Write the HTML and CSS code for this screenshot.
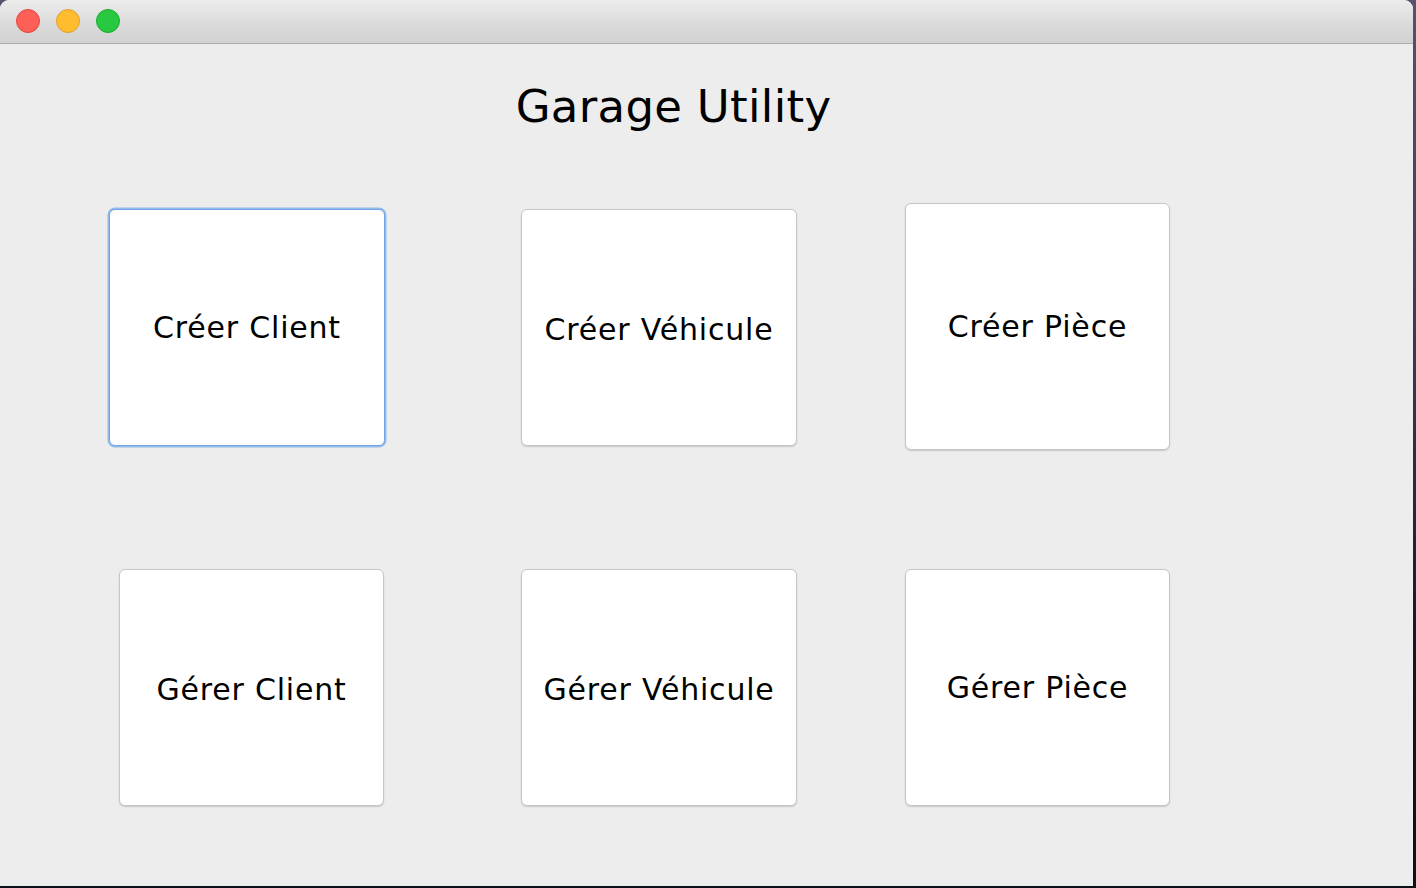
FILE: index.html
```html
<!DOCTYPE html>
<html lang="fr">
<head>
<meta charset="utf-8">
<title>Garage Utility</title>
<link rel="stylesheet" href="styles.css">
</head>
<body>
<div class="window">
  <div class="titlebar">
    <span class="light light--close"></span>
    <span class="light light--min"></span>
    <span class="light light--max"></span>
  </div>
  <div class="content">
    <h1 class="heading">Garage Utility</h1>
    <div class="grid">
      <button class="btn btn--focused col-a row-1 btn--offset">Créer Client</button>
      <button class="btn col-b row-1 btn--offset btn--low">Créer Véhicule</button>
      <button class="btn btn--narrow btn--tall col-c row-1">Créer Pièce</button>
      <button class="btn btn--narrow col-a row-2 btn--end btn--low">Gérer Client</button>
      <button class="btn col-b row-2 btn--low">Gérer Véhicule</button>
      <button class="btn btn--narrow col-c row-2">Gérer Pièce</button>
    </div>
  </div>
</div>
</body>
</html>
```
FILE: styles.css
```css
* { box-sizing: border-box; }

html, body {
  margin: 0;
  padding: 0;
}

body {
  width: 1416px;
  height: 888px;
  overflow: hidden;
  background: linear-gradient(180deg, #57526c 0%, #3a3850 40%, #12161f 75%, #0c1018 100%);
  font-family: "DejaVu Sans", "Liberation Sans", sans-serif;
}

.window {
  width: 1413px;
  height: 886px;
  background: #ededed;
  border-radius: 9px 9px 0 0;
  overflow: hidden;
  display: flex;
  flex-direction: column;
}

.titlebar {
  height: 44px;
  flex: none;
  background: linear-gradient(180deg, #ececec 0%, #dadada 60%, #d2d2d2 100%);
  border-bottom: 1px solid #adadad;
  display: flex;
  align-items: center;
  gap: 16px;
  padding: 0 0 2px 16px;
}

.light {
  width: 24px;
  height: 24px;
  border-radius: 50%;
  display: block;
}

.light--close { background: #fe5f57; border: 1px solid #e2463f; }
.light--min { background: #febc2e; border: 1px solid #e0a028; }
.light--max { background: #28c840; border: 1px solid #1daa2c; }

.content {
  flex: 1;
  display: flex;
  flex-direction: column;
}

.heading {
  margin: 36px 0 0 0;
  padding-right: 66px;
  text-align: center;
  font-weight: normal;
  font-size: 45px;
  line-height: 54px;
  letter-spacing: 0.3px;
  color: #000;
}

.grid {
  margin-top: 69px;
  padding-left: 109px;
  display: grid;
  grid-template-columns: 276px 136px 275px 109px 265px;
  grid-template-rows: 247px 237px;
  row-gap: 119px;
}

.col-a { grid-column: 1; }
.col-b { grid-column: 3; }
.col-c { grid-column: 5; }
.row-1 { grid-row: 1; }
.row-2 { grid-row: 2; }

.btn {
  width: 276px;
  height: 237px;
  align-self: start;
  justify-self: start;
  background: #ffffff;
  border: 1px solid #c6c6c6;
  border-radius: 6px;
  box-shadow: 0 1px 1.5px rgba(0, 0, 0, 0.16);
  font-family: "DejaVu Sans", "Liberation Sans", sans-serif;
  font-size: 30px;
  color: #000;
  padding: 0;
  letter-spacing: 0.8px;
}

.btn--narrow { width: 265px; }
.btn--tall { height: 247px; }
.btn--offset { margin-top: 6px; }
.btn--end { justify-self: end; margin-right: 1px; }
.btn--low { padding-top: 4px; }

.btn--focused {
  border: 1px solid #6fa6ea;
  box-shadow: 0 0 0 1.5px rgba(118, 168, 232, 0.75);
}
```
